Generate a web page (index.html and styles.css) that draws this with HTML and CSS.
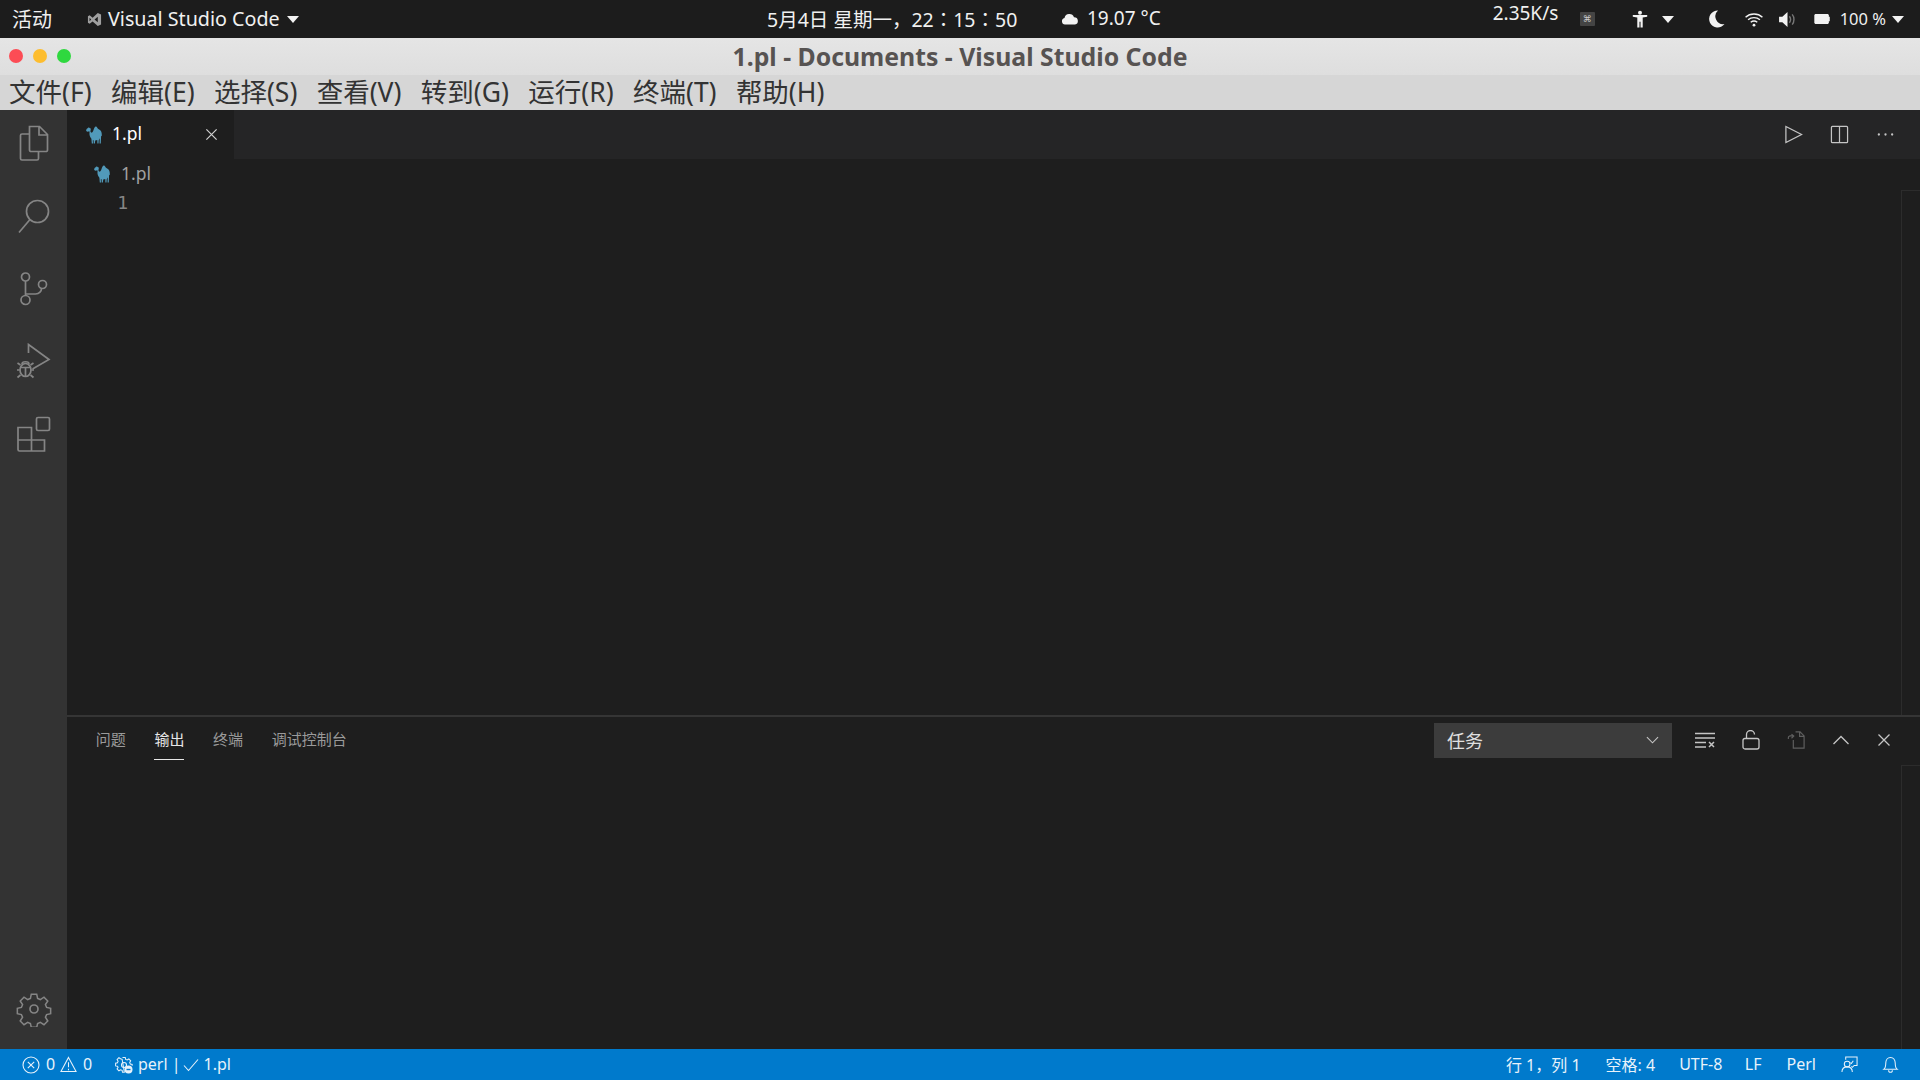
FILE: index.html
```html
<!DOCTYPE html>
<html lang="zh">
<head>
<meta charset="utf-8">
<title>1.pl - Documents - Visual Studio Code</title>
<link rel="stylesheet" href="styles.css">
</head>
<body>
<svg class="defs" width="0" height="0">
  <symbol id="camel" viewBox="0 0 16 18">
    <path fill="#519aba" d="M0 4.200 1 2.400l1.300-.3.500-1 .7.800 1 .3.300 1.300-.4 1.800c.2 1 .9 1.500 1.700 1.300C7.500 5.300 7.600 3.300 8.300 2c.6-1.200 1.500-1.700 2.200-1.200.7.500.9 1.500 1.500 1.900 1 .7 2.200 1 2.900 2.300.8 1.300 1 3 .9 4.700l-.7.500-.3 7.300h-1.200l.1-5.200-1 2-.2 3.200h-1.100l-.1-3.600-2.100.5-.3 3.100H7.700l-.1-3.300-.8.100.2 3.200H5.800l-.4-4.700c-1-1-1.700-2.600-1.900-4.200-.1-1.200 0-2.300.1-3.100l-1.300-.1-1.300.4z"/>
  </symbol>
</svg>

<header class="topbar">
  <div class="top-left">
    <span class="activities">活动</span>
    <svg class="vs-mark" viewBox="0 0 16 16"><path fill="#a0a0a0" d="M11.500 1 15 2.700v10.600L11.500 15 6 10l-3.200 2.500L1 11.500V4.500l1.800-1L6 6zM11.500 5 8 8l3.500 3zM2.700 6.200v3.600L4.500 8z"/></svg>
    <span class="app-name">Visual Studio Code</span>
    <i class="caret"></i>
  </div>
  <div class="top-center">
    <span class="clock">5月4日 星期一，22<span class="colon" lang="zh-Hant">：</span>15<span class="colon" lang="zh-Hant">：</span>50</span>
    <svg class="cloud" viewBox="0 0 18 12"><path fill="#f2f2f2" d="M4 11.500a3.300 3.300 0 0 1-.5-6.500A5 5 0 0 1 13 4.200a3.700 3.700 0 0 1 1 7.300z"/></svg>
    <span class="temp">19.07 °C</span>
  </div>
  <div class="top-right">
    <span class="net">2.35K/s</span>
    <span class="cmd-key">⌘</span>
    <svg class="tray access" viewBox="0 0 16 20"><circle cx="8" cy="3" r="2.200" fill="#f2f2f2"/><path fill="#f2f2f2" d="M0 5.500h16v2l-5 .8v11.200H8.600v-6.500H7.400v6.500H5V8.300l-5-.8z"/></svg>
    <i class="caret tray-caret"></i>
    <svg class="tray moon" viewBox="0 0 16 18"><path fill="#f2f2f2" d="M9 .5A8.500 8.500 0 1 0 15.500 14 7.800 7.800 0 0 1 9 .5z"/></svg>
    <svg class="tray wifi" viewBox="0 0 20 16"><g fill="none" stroke="#f2f2f2" stroke-width="1.500"><path d="M1 5.500c5-4.500 13-4.500 18 0"/><path d="M3.700 8.200c3.500-3 9-3 12.600 0"/><path d="M6.500 11c2-1.600 5-1.600 7 0"/></g><circle cx="10" cy="14" r="1.500" fill="#f2f2f2"/></svg>
    <svg class="tray vol" viewBox="0 0 18 16"><path fill="#f2f2f2" d="M0 5h3.500L9 0v16l-5.500-5H0z"/><path fill="none" stroke="#777" stroke-width="1.500" d="M11 4.500c1.500 2 1.500 5 0 7M14 2.500c2.500 3 2.500 8 0 11"/></svg>
    <svg class="tray batt" viewBox="0 0 18 11"><path fill="#f2f2f2" d="M1 0h14l1 1v2h1v5h-1v2l-1 1H1l-1-1V1z"/></svg>
    <span class="batt-text">100 %</span>
    <i class="caret batt-caret"></i>
  </div>
</header>

<div class="titlebar">
  <div class="lights"><i class="light red"></i><i class="light yellow"></i><i class="light green"></i></div>
  <div class="title">1.pl - Documents - Visual Studio Code</div>
</div>

<nav class="menubar">
  <span>文件(F)</span><span>编辑(E)</span><span>选择(S)</span><span>查看(V)</span><span>转到(G)</span><span>运行(R)</span><span>终端(T)</span><span>帮助(H)</span>
</nav>

<div class="workbench">
  <aside class="activity">
    <div class="activity-top">
      <svg class="act" viewBox="0 0 36 36"><path d="M13.500 1.500h10l8 8v15.500a1.500 1.500 0 0 1-1.500 1.500H15a1.500 1.500 0 0 1-1.500-1.500zM23 1.500v8.500h8.500M13.500 9H6a1.500 1.500 0 0 0-1.500 1.500v23A1.500 1.500 0 0 0 6 35h15a1.500 1.500 0 0 0 1.500-1.500v-7"/></svg>
      <svg class="act" viewBox="0 0 36 36"><circle cx="21.500" cy="13.500" r="11"/><path d="M14 21.500 3 34.500"/></svg>
      <svg class="act" viewBox="0 0 36 36"><circle cx="9.500" cy="7" r="4"/><circle cx="9.500" cy="30" r="4.500"/><circle cx="26.500" cy="14.500" r="4"/><path d="M9.500 11v14.500M9.500 24h10c4 0 6-3 6-5.500"/></svg>
      <svg class="act" viewBox="0 0 36 36"><path d="M12.500 10V1.500L33 16.500 16.500 26"/><ellipse cx="9.500" cy="27" rx="5.500" ry="6.500"/><path d="M5 24.500h9M9.500 24v9M4.500 22 1.500 20M14.500 22l3-2M3.500 27H1M15.500 27H18M4.500 32 1.500 34.500M14.500 32l3 2.500M6 21c0-3 7-3 7 0"/></svg>
      <svg class="act" viewBox="0 0 36 36"><path d="M2 11.500h13.500v12.500H28.500v11H3.500A1.500 1.500 0 0 1 2 33.500zM2 24h13.500v11"/><rect x="20.500" y="1.500" width="13" height="13" rx="1.500"/></svg>
    </div>
    <svg class="act gear" viewBox="0 0 36 36"><path d="M15 1.500h6l1 4.700 3 1.300 4.100-2.600 4.200 4.200-2.600 4.100 1.300 3 4.500 1v6l-4.500 1-1.300 3 2.600 4.100-4.200 4.200-4.100-2.600-3 1.300-1 4.200h-6l-1-4.200-3-1.300-4.100 2.600-4.200-4.200 2.600-4.100-1.300-3-4.500-1v-6l4.500-1 1.300-3L2.700 9.100l4.200-4.200L11 7.500l3-1.300z" transform="translate(1.800 1.800) scale(.9)"/><circle cx="18" cy="18" r="4"/></svg>
  </aside>

  <main class="main">
    <section class="editor-group">
      <div class="tabs">
        <div class="tab">
          <svg class="camel"><use href="#camel"/></svg>
          <span class="tab-name">1.pl</span>
          <svg class="tab-close" viewBox="0 0 14 14"><path d="M1.500 1.500l11 11M12.500 1.500l-11 11"/></svg>
        </div>
        <div class="editor-actions">
          <svg class="ea" viewBox="0 0 20 20"><path d="M2 1.500 18.500 10 2 18.500z"/></svg>
          <svg class="ea" viewBox="0 0 20 20"><rect x="1.500" y="1.500" width="17" height="17" rx="1"/><path d="M10 1.500v17"/></svg>
          <svg class="ea dots" viewBox="0 0 20 20"><circle cx="3" cy="10" r="1.200"/><circle cx="10" cy="10" r="1.200"/><circle cx="17" cy="10" r="1.200"/></svg>
        </div>
      </div>
      <div class="breadcrumb">
        <svg class="camel"><use href="#camel"/></svg>
        <span class="crumb-name">1.pl</span>
      </div>
      <div class="editor-body">
        <div class="line-no">1</div>
        <div class="scroll-box"></div>
      </div>
    </section>

    <section class="panel">
      <div class="panel-head">
        <div class="panel-tabs">
          <span>问题</span><span class="active">输出</span><span>终端</span><span>调试控制台</span>
        </div>
        <div class="panel-actions">
          <div class="select">
            <span>任务</span>
            <svg viewBox="0 0 14 8"><path d="M1 1l6 6 6-6"/></svg>
          </div>
          <svg class="pa wide" viewBox="0 0 20 16"><path d="M0 1.500h20M0 6h20M0 10.500h11M0 15h11M14 10l5 5M19 10l-5 5"/></svg>
          <svg class="pa lock" viewBox="0 0 18 20"><path d="M4.500 8V4.500a4 4 0 0 1 8 0"/><rect x="1" y="8.500" width="16" height="10.500" rx="2"/></svg>
          <svg class="pa dim" viewBox="0 0 20 20"><path d="M7 5.500h-4a2 2 0 0 0-1.500 2V9M5 3.500 7.500 5.700 5 8M9.500 1h5l4.500 4.500V19H7V10M14 1v5h5"/></svg>
          <svg class="pa" viewBox="0 0 18 18"><path d="M1.500 13 9 5.500l7.500 7.500"/></svg>
          <svg class="pa" viewBox="0 0 14 14"><path d="M1.500 1.500l11 11M12.500 1.500l-11 11"/></svg>
        </div>
      </div>
      <div class="panel-body"><div class="scroll-box"></div></div>
    </section>
  </main>
</div>

<footer class="status">
  <div class="status-left">
    <svg class="si err" viewBox="0 0 18 18"><circle cx="9" cy="9" r="8"/><path d="M5.800 5.800l6.400 6.400M12.200 5.800l-6.400 6.400"/></svg>
    <span class="count">0</span>
    <svg class="si warn" viewBox="0 0 18 18"><path d="M9 1.500 17 16.500H1zM9 6.500v5.500M9 13.500v1.500"/></svg>
    <span class="count">0</span>
    <svg class="si cog" viewBox="0 0 18 18"><path d="M7.500 1h3l.4 2 1.700.7 1.800-1.100 2 2-1.100 1.800.7 1.700 2 .4v1.500M9.500 17h-2l-.4-2-1.700-.7-1.800 1.100-2-2 1.100-1.800L2 10.500l-2-.4v-3l2-.4.700-1.700L1.600 3.200l2-2 1.800 1.100L7.100 3z" transform="translate(.6 .6) scale(.92)"/><circle cx="9" cy="9" r="2.500"/><circle class="cog-badge" cx="13.500" cy="13.500" r="4"/><path class="cog-bar" d="M11.500 13.500h4"/></svg>
    <span class="task">perl |</span>
    <svg class="si check" viewBox="0 0 16 14"><path d="M1 7.500 5.500 12.500 15 1.500"/></svg>
    <span class="task">1.pl</span>
  </div>
  <div class="status-right">
    <span class="s-pos">行 1，列 1</span>
    <span class="s-space">空格: 4</span>
    <span class="s-enc">UTF-8</span>
    <span>LF</span>
    <span>Perl</span>
    <svg class="si feedback" viewBox="0 0 18 18"><path d="M5 4V1h12v9h-3l-2 2-1-1"/><path d="M13 5l-2 3-1-1"/><circle cx="6.500" cy="8.500" r="3"/><path d="M1 17c0-3.500 2.500-5.500 5.500-5.500S12 13.500 12 17"/></svg>
    <svg class="si bell" viewBox="0 0 18 18"><path d="M2 14c2-1.500 2-3.500 2-6.500C4 4 6 1.500 9 1.500S14 4 14 7.500c0 3 0 5 2 6.500zM7 15c0 3 4 3 4 0"/></svg>
  </div>
</footer>
</body>
</html>
```
FILE: styles.css
```css
* { box-sizing: border-box; }
html, body { margin: 0; height: 100%; overflow: hidden; }
body {
  width: 1920px;
  height: 1080px;
  display: flex;
  flex-direction: column;
  font-family: "Noto Sans", "Noto Sans CJK SC", sans-serif;
  background: #1e1e1e;
}
.defs { position: absolute; }

/* GNOME top bar */
.topbar {
  height: 38px;
  flex: none;
  background: #1c1c1c;
  color: #f0f0f0;
  font-size: 18px;
  position: relative;
  display: flex;
  align-items: center;
  justify-content: space-between;
}
.top-left { display: flex; align-items: center; padding-left: 12px; }
.activities { font-size: 20px; width: 75px; padding-bottom: 2px; }
.vs-mark { width: 15px; height: 15px; margin-left: 0; }
.app-name { font-size: 19.700px; margin-left: 6px; padding-bottom: 2px; }
.caret {
  width: 0; height: 0;
  border-left: 6.500px solid transparent;
  border-right: 6.500px solid transparent;
  border-top: 7px solid #f2f2f2;
  margin-left: 7px;
}
.top-center {
  position: absolute;
  left: 767px;
  top: 0;
  height: 38px;
  display: flex;
  align-items: center;
}
.clock { font-size: 19.500px; width: 294px; white-space: nowrap; padding-bottom: 2px; }
.colon { font-family: "Noto Sans CJK TC", sans-serif; }
.cloud { width: 18px; height: 12px; margin-right: 8px; }
.temp { font-size: 19px; padding-bottom: 2px; }
.top-right { display: flex; align-items: center; margin-left: auto; padding-right: 16px; }
.net { font-size: 19px; margin-top: -12px; width: 87px; }
.cmd-key {
  width: 15px; height: 14px;
  background: #444;
  border-radius: 1px;
  color: #ccc;
  font-size: 9px;
  line-height: 14px;
  text-align: center;
  font-family: "DejaVu Sans", sans-serif;
  margin-right: 37px;
}
.tray { flex: none; }
.access { width: 16px; height: 18px; }
.tray-caret { margin-left: 14px; }
.moon { width: 16px; height: 18px; margin-left: 35px; }
.wifi { width: 20px; height: 15px; margin-left: 19px; }
.vol { width: 17px; height: 15px; margin-left: 15px; }
.batt { width: 17px; height: 10px; margin-left: 18px; }
.batt-text { font-size: 16.500px; margin-left: 9px; white-space: nowrap; padding-bottom: 1px; }
.batt-caret { margin-left: 6px; }

/* Window title */
.titlebar {
  height: 37px;
  flex: none;
  background: linear-gradient(#e5e5e5, #dedede);
  display: flex;
  align-items: center;
  justify-content: center;
  position: relative;
}
.lights { position: absolute; left: 9px; top: 11px; display: flex; gap: 10px; }
.light { width: 14px; height: 14px; border-radius: 50%; }
.red { background: #fc4c55; }
.yellow { background: #fdbd2e; }
.green { background: #2fd83f; }
.title { font-size: 24.800px; font-weight: 700; color: #575352; white-space: nowrap; padding-bottom: 2px; }

.menubar {
  height: 35px;
  flex: none;
  background: #d6d6d6;
  color: #333;
  font-size: 26.500px;
  line-height: 35px;
  display: flex;
  gap: 19.300px;
  padding-left: 9px;
  white-space: nowrap;
}

/* Workbench */
.workbench { flex: 1; min-height: 0; display: flex; position: relative; }
.activity {
  width: 67px;
  flex: none;
  background: #333;
  display: flex;
  flex-direction: column;
  justify-content: space-between;
  align-items: center;
  padding: 15px 0 22px;
}
.activity-top { display: flex; flex-direction: column; gap: 36.700px; }
.act { width: 36px; height: 36px; display: block; fill: none; stroke: #858585; stroke-width: 1.700; }
.main { flex: 1; min-width: 0; display: flex; flex-direction: column; background: #1e1e1e; }

.editor-group { height: 607px; flex: none; display: flex; flex-direction: column; border-bottom: 2px solid #353535; }
.tabs { height: 49px; flex: none; background: #252526; display: flex; justify-content: space-between; align-items: center; }
.tab {
  width: 167px;
  height: 49px;
  background: #1e1e1e;
  display: flex;
  align-items: center;
  padding-left: 19px;
}
.camel { width: 16px; height: 18px; flex: none; }
.tab-name { color: #fff; font-size: 17.500px; margin-left: 10px; flex: 1; padding-bottom: 4px; }
.tab-close { width: 13px; height: 13px; margin-right: 16px; fill: none; stroke: #d0d0d0; stroke-width: 1.300; }
.editor-actions { display: flex; align-items: center; gap: 27px; padding-right: 25px; }
.ea { width: 19px; height: 19px; fill: none; stroke: #c5c5c5; stroke-width: 1.300; }
.dots { fill: #c5c5c5; stroke: none; }
.breadcrumb {
  height: 30px;
  flex: none;
  display: flex;
  align-items: center;
  gap: 11px;
  padding-left: 27px;
  color: #a0a0a0;
  font-size: 17.500px;
}
.crumb-name { padding-bottom: 2px; }
.editor-body { flex: 1; position: relative; }
.line-no {
  width: 61px;
  text-align: right;
  color: #858585;
  font-size: 18px;
  line-height: 28px;
  font-family: "DejaVu Sans Mono", monospace;
  margin-top: 0;
}
.scroll-box {
  position: absolute;
  left: 1834px;
  top: 1px;
  bottom: 0;
  width: 19px;
  border-left: 1px solid #2c2c2c;
  border-top: 1px solid #2c2c2c;
}

.panel { flex: 1; min-height: 0; display: flex; flex-direction: column; }
.panel-head { height: 47px; flex: none; display: flex; justify-content: space-between; align-items: center; padding-top: 1px; }
.panel-tabs { display: flex; gap: 28.700px; padding-left: 28.700px; font-size: 15px; color: #9a9a9a; height: 100%; }
.panel-tabs span { display: flex; align-items: center; border-bottom: 1px solid transparent; height: 42px; }
.panel-tabs .active { color: #e7e7e7; border-bottom-color: #e7e7e7; }
.panel-actions { display: flex; align-items: center; padding-bottom: 2px; }
.select {
  width: 238px;
  height: 35px;
  background: #3c3c3c;
  color: #e0e0e0;
  font-size: 18px;
  display: flex;
  align-items: center;
  justify-content: space-between;
  padding: 0 13px;
  margin-right: 23px;
}
.select svg { width: 13px; height: 8px; fill: none; stroke: #c5c5c5; stroke-width: 1.200; }
.pa { width: 18px; height: 18px; fill: none; stroke: #c5c5c5; stroke-width: 1.300; margin-right: 27px; }
.pa.wide { width: 20px; height: 16px; margin-right: 27px; stroke-width: 1.500; }
.pa.lock { height: 20px; }
.pa.dim { stroke: #5f5f5f; }
.pa:last-child { width: 14px; height: 14px; margin-right: 29px; }
.panel-body { flex: 1; position: relative; }

/* Status bar */
.status {
  height: 31px;
  flex: none;
  background: #007acc;
  color: #e8f2fa;
  font-size: 16px;
  display: flex;
  justify-content: space-between;
  align-items: center;
}
.status span { padding-bottom: 2px; }
.status-left { display: flex; align-items: center; padding-left: 22px; }
.si { width: 17px; height: 17px; fill: none; stroke: #e8f2fa; stroke-width: 1.100; flex: none; }
.err { width: 18px; height: 18px; }
.count { margin-left: 6px; width: 14px; }
.cog { margin-left: 18px; margin-right: 5px; width: 18px; height: 18px; }
.cog-badge { fill: #e8f2fa; stroke: none; }
.cog-bar { stroke: #007acc; stroke-width: 1.400; }
.task { white-space: nowrap; }
.check { width: 16px; height: 14px; margin: 0 5px 0 2px; }
.status-right { display: flex; align-items: center; gap: 25px; padding-right: 21px; white-space: nowrap; }
.s-space { margin-right: -1px; }
.s-enc { margin-right: -2.500px; }
.status-right .bell { margin-left: -1px; }
```
